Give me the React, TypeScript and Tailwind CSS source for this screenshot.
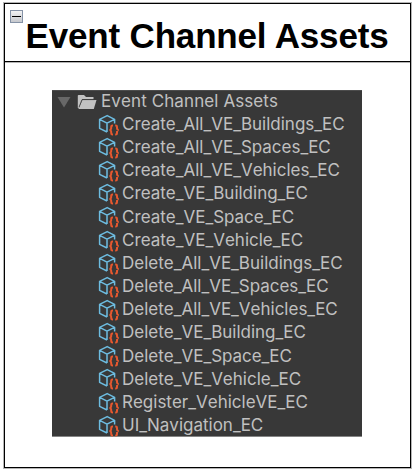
const assets = [
  'Create_All_VE_Buildings_EC',
  'Create_All_VE_Spaces_EC',
  'Create_All_VE_Vehicles_EC',
  'Create_VE_Building_EC',
  'Create_VE_Space_EC',
  'Create_VE_Vehicle_EC',
  'Delete_All_VE_Buildings_EC',
  'Delete_All_VE_Spaces_EC',
  'Delete_All_VE_Vehicles_EC',
  'Delete_VE_Building_EC',
  'Delete_VE_Space_EC',
  'Delete_VE_Vehicle_EC',
  'Register_VehicleVE_EC',
  'UI_Navigation_EC',
];

function AssetIcon() {
  return (
    <svg className="mr-[2.5px] h-[22px] w-[22px] shrink-0" viewBox="0 0 22 22" fill="none">
      <path
        d="M9 18 1.6 14.3V5.4L9.2 1.6 16.6 5.4V9.6M1.6 5.4l7.4 3.8 7.6-3.8M9 9.2V18"
        stroke="#6dbce0"
        strokeWidth="1.5"
        strokeLinejoin="round"
      />
      <path
        d="M15 11.4h-.5q-1.3 0-1.3 1.3v1.6q0 1.4-1.6 1.7 1.6.3 1.6 1.7v1.5q0 1.3 1.3 1.3h.5M17.2 11.4h.5q1.3 0 1.3 1.3v1.6q0 1.4 1.6 1.7-1.6.3-1.6 1.7v1.5q0 1.3-1.3 1.3h-.5"
        stroke="#e6582f"
        strokeWidth="2"
      />
    </svg>
  );
}

export default function App() {
  return (
    <div className="h-[473px] w-[418px] bg-white pl-[4px] pt-[3px]">
      <div className="relative flex h-[465px] w-[407px] flex-col border border-black shadow-[0_0_0_1px_#b5b5b5]">
        <div className="absolute left-[5px] top-[6px] flex h-[13px] w-[13px] items-center justify-center border border-[#8592a6] bg-linear-to-b from-[#f2f2f3] to-[#c6c8cd]">
          <div className="h-px w-[9px] bg-black" />
        </div>
        <header className="flex h-[58px] items-center justify-center border-b border-black pr-px pt-[5px] shadow-[0_1px_0_#b5b5b5]">
          <h1 className="whitespace-nowrap font-['Liberation_Sans',Arial,sans-serif] text-[35px] font-bold leading-none tracking-[-0.17px] text-black">
            Event Channel Assets
          </h1>
        </header>
        <div className="ml-[47px] mt-[28px] h-[347px] w-[310px] border-b border-t border-b-[#858585] border-t-[#4c4c4c] bg-[#383838] font-[Inter,sans-serif] text-[17px] text-[#c0c0c0] [font-kerning:none]">
          <div className="-mt-[1px] flex h-[23.17px] items-center whitespace-nowrap pl-[5px]">
            <svg className="h-[12px] w-[14px] shrink-0" viewBox="0 0 14 12">
              <path d="M.5 1h13L7 11.5Z" fill="#686868" />
            </svg>
            <svg className="ml-[6px] mr-[4px] h-[16px] w-[20px] shrink-0" viewBox="0 0 20 16">
              <path d="M.8 14V1.8Q.8 1 1.6 1H7l2 2h7.5v2.2H5.3L1.8 14Z" fill="#c2c2c2" />
              <path d="M5.4 6H19.5L16.8 15H1.4Z" fill="#c2c2c2" />
              <path d="M2 13.2 5 5.6H17.5" fill="none" stroke="#383838" strokeWidth="0.8" />
            </svg>
            <span className="tracking-[0.1px]">Event Channel Assets</span>
          </div>
          {assets.map((name) => (
            <div key={name} className="flex h-[23.17px] items-center whitespace-nowrap pl-[45.5px]">
              <AssetIcon />
              <span>{name}</span>
            </div>
          ))}
        </div>
      </div>
    </div>
  );
}
